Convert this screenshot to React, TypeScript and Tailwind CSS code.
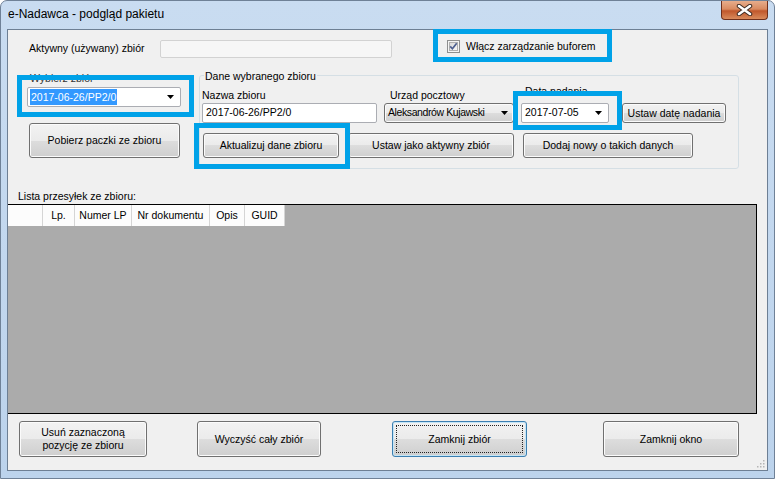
import React from 'react';

const btnBg =
  'bg-[linear-gradient(to_bottom,#f2f2f2_0%,#ebebeb_50%,#dddddd_50%,#cfcfcf_100%)]';

function WinButton({
  className = '',
  children,
  isDefault = false,
}: {
  className?: string;
  children: React.ReactNode;
  isDefault?: boolean;
}) {
  return (
    <div
      className={`relative flex shrink-0 items-center justify-center rounded-[3px] border text-center leading-[13px] ${btnBg} ${
        isDefault
          ? 'border-[#3c7fb1] shadow-[inset_0_0_0_1px_#c4e5f6]'
          : 'border-[#707070] shadow-[inset_0_0_0_1px_#fbfbfb]'
      } ${className}`}
    >
      {isDefault && (
        <div className="pointer-events-none absolute inset-[3px] border border-dotted border-[#222]" />
      )}
      <span>{children}</span>
    </div>
  );
}

function Arrow() {
  return (
    <svg width="7" height="4" viewBox="0 0 7 4" className="shrink-0">
      <path d="M0 0h7L3.5 4z" fill="#000" />
    </svg>
  );
}

function Highlight({ className }: { className: string }) {
  return (
    <div
      className={`pointer-events-none absolute border-[5px] border-[#00a2e8] ${className}`}
    />
  );
}

function CheckBox() {
  return (
    <svg width="13" height="13" viewBox="0 0 13 13" className="shrink-0">
      <defs>
        <linearGradient id="cbg" x1="0" y1="0" x2="1" y2="1">
          <stop offset="0" stopColor="#d6d6d6" />
          <stop offset="1" stopColor="#fafafa" />
        </linearGradient>
      </defs>
      <rect x="0.5" y="0.5" width="12" height="12" fill="#f4f4f4" stroke="#8e8f8f" />
      <rect x="2.5" y="2.5" width="8" height="8" fill="url(#cbg)" stroke="#b0b0b0" />
      <path
        d="M3.2 6.4l2.2 2.4 4.3-5.6"
        fill="none"
        stroke="#4d5f8f"
        strokeWidth="1.7"
      />
    </svg>
  );
}

const columns = [
  { name: '', w: 'w-[35px]' },
  { name: 'Lp.', w: 'w-[32px]' },
  { name: 'Numer LP', w: 'w-[57px]' },
  { name: 'Nr dokumentu', w: 'w-[78px]' },
  { name: 'Opis', w: 'w-[35px]' },
  { name: 'GUID', w: 'w-[40px]' },
];

export default function App() {
  return (
    <div className="flex h-[479px] w-[775px] flex-col overflow-hidden rounded-t-[7px] border border-[#6f8197] bg-[linear-gradient(to_bottom,#c9dcf1,#bcd3ec)] font-['Liberation_Sans',Arial,sans-serif] text-[10.5px] text-black">
      {/* title bar */}
      <div className="flex h-[28px] shrink-0 items-start">
        <div className="pl-[7px] pt-[5px] text-[12px] leading-[16px] text-black">
          e-Nadawca - podgląd pakietu
        </div>
        <div className="ml-auto mr-[6px] flex h-[19px] w-[47px] items-center justify-center rounded-b-[4px] border border-t-0 border-[#6e2f1c] bg-[linear-gradient(to_bottom,#e7ad8c_0%,#d98a60_45%,#c0572c_55%,#d98b5c_100%)]">
          <svg width="17" height="12" viewBox="0 0 17 12">
            <path d="M3 2l11 8M14 2L3 10" stroke="#3d2a22" strokeWidth="4.5" strokeLinecap="round" />
            <path d="M3 2l11 8M14 2L3 10" stroke="#fff" strokeWidth="2.6" strokeLinecap="round" />
          </svg>
        </div>
      </div>

      {/* client area */}
      <div className="relative ml-[6px] flex h-[442px] w-[761px] shrink-0 flex-col border border-[#6d7f94] bg-[#f0f0f0]">
        {/* row 1 */}
        <div className="mt-[10px] flex h-[18px]">
          <div className="flex w-[152px] items-center pl-[21px]">Aktywny (używany) zbiór</div>
          <div className="h-[18px] w-[232px] rounded-[2px] border border-[#d2d2d2] bg-[#f6f6f6]" />
          <div className="ml-[55px] flex h-[13px] items-center gap-[6px]">
            <CheckBox />
            <span>Włącz zarządzanie buforem</span>
          </div>
        </div>

        {/* row 2 */}
        <div className="mt-[17px] flex">
          <div className="ml-[19px] flex w-[154px] flex-col">
            <div className="-mt-[3px] h-[15px] pl-[3px] leading-[12px] text-[#333]">Wybierz zbiór</div>
            <div className="flex h-[20px] items-center rounded-[2px] border border-[#abadb3] bg-white pl-[2px] pr-[6px]">
              <span className="bg-[#3399ff] px-[1px] leading-[16px] text-white">2017-06-26/PP2/0</span>
              <div className="ml-auto">
                <Arrow />
              </div>
            </div>
            <WinButton className="ml-[2px] mt-[16px] h-[35px] w-[151px]">Pobierz paczki ze zbioru</WinButton>
          </div>

          {/* group box */}
          <div className="relative ml-[18px] flex h-[94px] w-[540px] flex-col rounded-[3px] border border-[#d5dfe5]">
            <div className="absolute left-[4px] top-[-6px] bg-[#f0f0f0] px-[1px] leading-[13px]">
              Dane wybranego zbioru
            </div>
            <div className="flex h-[47px] items-end">
              <div className="ml-[2px] flex w-[175px] flex-col">
                <div className="mb-[1px] leading-[13px]">Nazwa zbioru</div>
                <div className="flex h-[20px] items-center rounded-[2px] border border-[#abadb3] bg-white pl-[3px]">
                  2017-06-26/PP2/0
                </div>
              </div>
              <div className="ml-[7px] flex w-[130px] flex-col">
                <div className="mb-[1px] pl-[6px] leading-[13px]">Urząd pocztowy</div>
                <div className={`flex h-[20px] items-center rounded-[3px] border border-[#707070] pl-[3px] pr-[5px] ${btnBg} shadow-[inset_0_0_0_1px_#fbfbfb]`}>
                  <span className="tracking-[-0.4px]">Aleksandrów Kujawski</span>
                  <div className="ml-auto">
                    <Arrow />
                  </div>
                </div>
              </div>
              <div className="ml-[7px] flex w-[88px] flex-col">
                <div className="mb-[5px] pl-[4px] leading-[13px]">Data nadania</div>
                <div className="flex h-[20px] items-center rounded-[2px] border border-[#abadb3] bg-white pl-[3px] pr-[6px]">
                  <span>2017-07-05</span>
                  <div className="ml-auto">
                    <Arrow />
                  </div>
                </div>
              </div>
              <WinButton className="ml-[13px] h-[20px] w-[104px]">Ustaw datę nadania</WinButton>
            </div>
            <div className="mt-[10px] flex">
              <WinButton className="ml-[3px] h-[25px] w-[136px]">Aktualizuj dane zbioru</WinButton>
              <WinButton className="ml-[9px] h-[25px] w-[166px]">Ustaw jako aktywny zbiór</WinButton>
              <WinButton className="ml-[9px] h-[25px] w-[170px]">Dodaj nowy o takich danych</WinButton>
            </div>
          </div>
        </div>

        {/* list */}
        <div className="mt-[21px] h-[13px] pl-[10px] leading-[13px]">Lista przesyłek ze zbioru:</div>
        <div className="mt-[1px] h-[210px] w-[749px] border-b border-r border-t border-black bg-[#ababab]">
          <div className="flex h-[21px] w-fit bg-[#fcfcfc]">
            {columns.map((c, i) => (
              <div
                key={i}
                className={`${c.w} flex items-center justify-center border-r border-[#d5d5d5] leading-[13px]`}
              >
                {c.name}
              </div>
            ))}
          </div>
        </div>

        {/* bottom buttons */}
        <div className="mt-[7px] flex">
          <WinButton className="ml-[11px] h-[36px] w-[128px]">
            Usuń zaznaczoną
            <br />
            pozycję ze zbioru
          </WinButton>
          <WinButton className="ml-[50px] h-[36px] w-[124px]">Wyczyść cały zbiór</WinButton>
          <WinButton isDefault className="ml-[71px] h-[36px] w-[135px]">
            Zamknij zbiór
          </WinButton>
          <WinButton className="ml-[76px] h-[36px] w-[136px]">Zamknij okno</WinButton>
        </div>

        {/* resize grip */}
        <svg className="absolute bottom-[2px] right-[2px]" width="9" height="9" viewBox="0 0 9 9">
          {[
            [7, 1],
            [7, 4],
            [4, 4],
            [7, 7],
            [4, 7],
            [1, 7],
          ].map(([x, y], i) => (
            <rect key={i} x={x} y={y} width="1.5" height="1.5" fill="#b5b5b5" />
          ))}
        </svg>

        {/* annotation boxes */}
        <Highlight className="left-[9px] top-[45px] h-[42px] w-[177px]" />
        <Highlight className="left-[425px] top-[-1px] h-[33px] w-[179px]" />
        <Highlight className="left-[505px] top-[61px] h-[39px] w-[109px]" />
        <Highlight className="left-[186px] top-[93px] h-[46px] w-[156px]" />
      </div>
    </div>
  );
}
